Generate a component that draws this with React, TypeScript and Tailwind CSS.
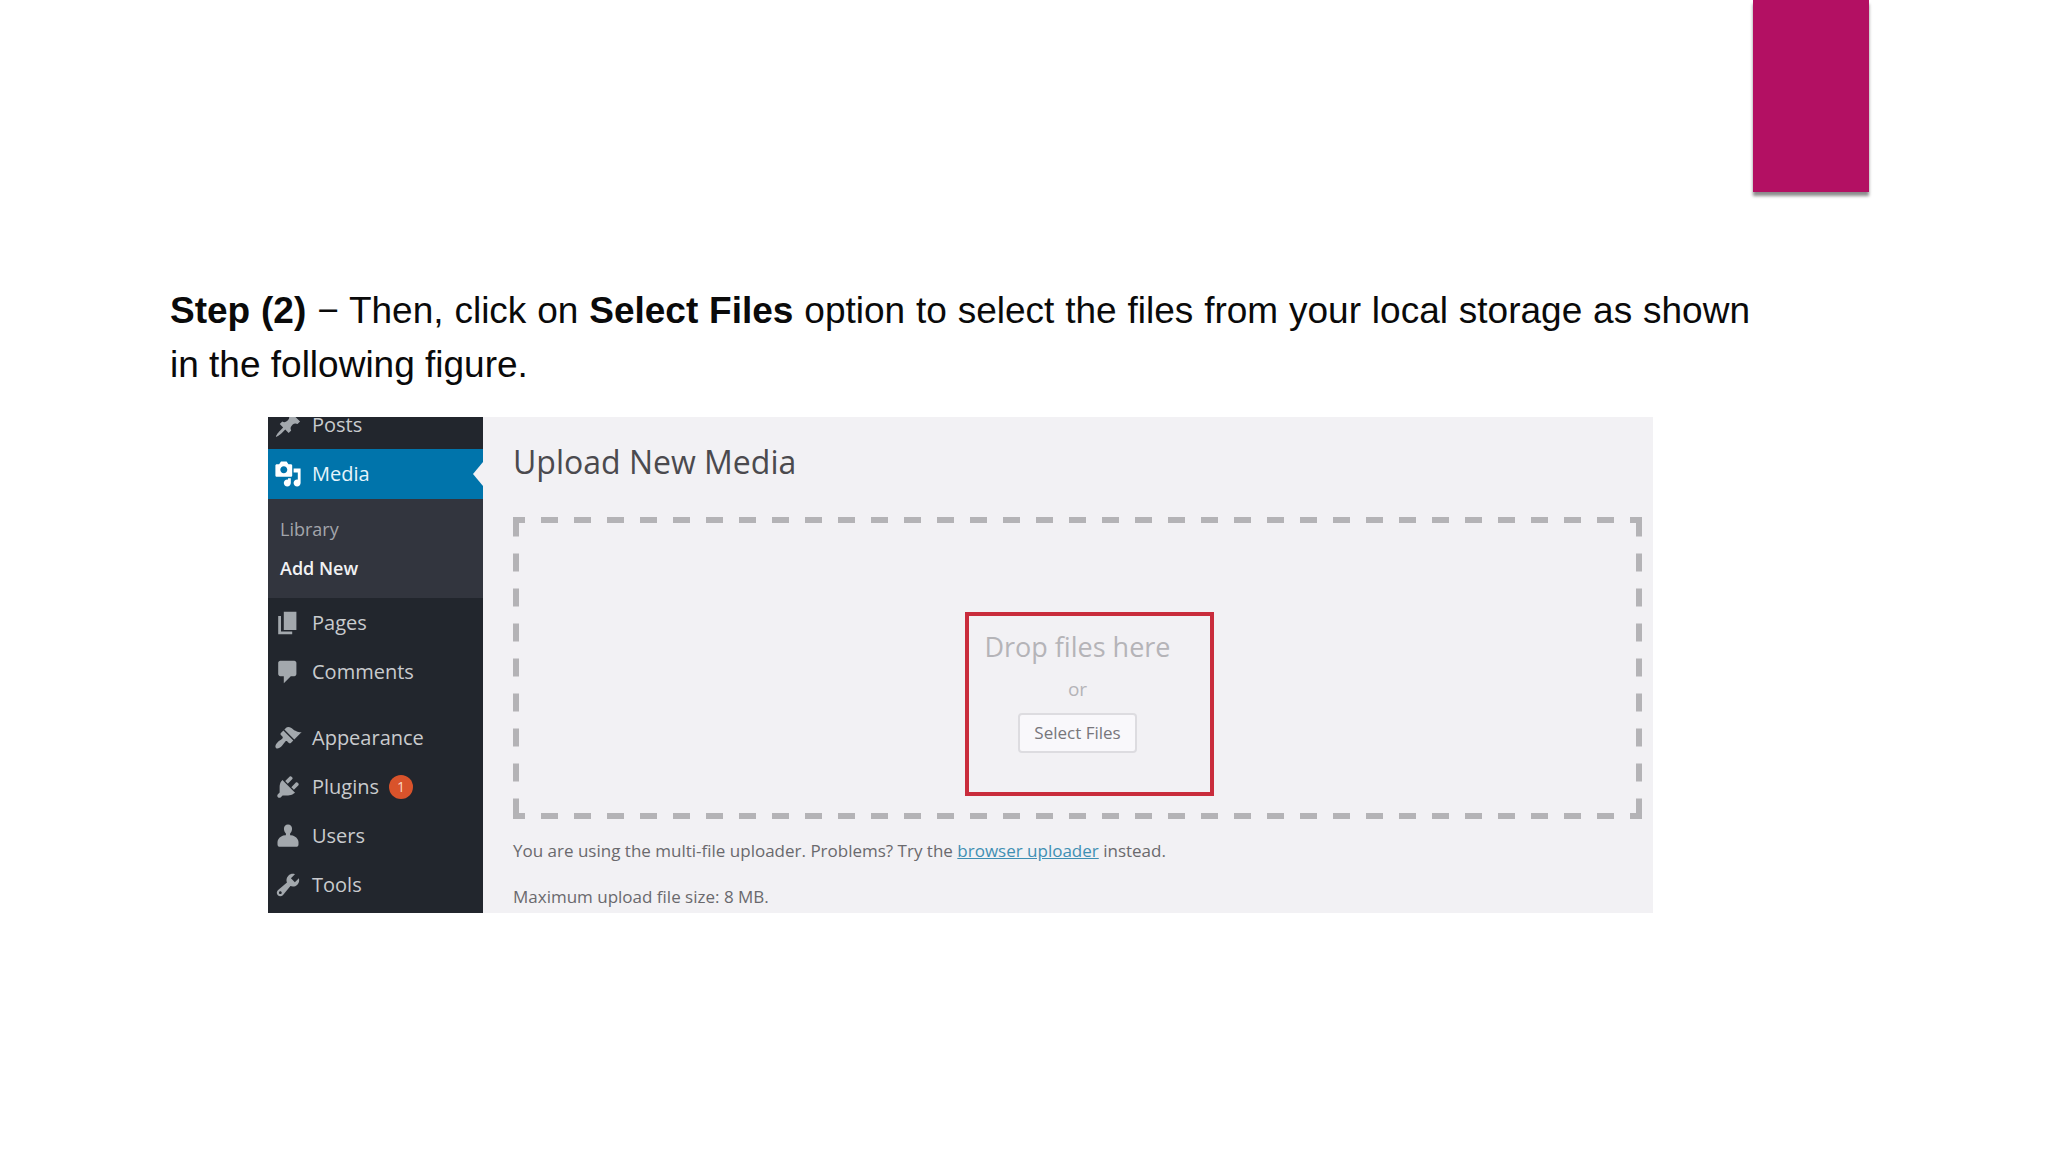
import {ReactNode} from 'react';

type MenuItem = {
    label: string;
    icon: string;
    badge?: number;
};

const icons = {
    posts: 'M10.44 3.02l1.82-1.82 6.36 6.35-1.83 1.82c-1.05-.68-2.48-.57-3.41.36l-.75.75c-.92.93-1.04 2.35-.35 3.41l-1.83 1.82-2.41-2.41-2.8 2.79c-.42.42-3.38 2.71-3.8 2.29s1.86-3.39 2.28-3.81l2.79-2.79L4.1 9.36l1.83-1.82c1.05.69 2.48.57 3.4-.36l.75-.75c.93-.92 1.05-2.35.36-3.41z',
    media: 'M13 11V4c0-.55-.45-1-1-1h-1.67L9 1H5L3.67 3H2c-.55 0-1 .45-1 1v7c0 .55.45 1 1 1h10c.55 0 1-.45 1-1zM7 4.5c1.38 0 2.5 1.12 2.5 2.5S8.38 9.5 7 9.5 4.5 8.38 4.5 7 5.62 4.5 7 4.5zM14 6h5v10.5c0 1.38-1.12 2.5-2.5 2.5S14 17.88 14 16.5s1.12-2.5 2.5-2.5c.17 0 .34.02.5.05V9h-3V6zm-4 8.05V13h2v3.5c0 1.38-1.12 2.5-2.5 2.5S7 17.88 7 16.5 8.12 14 9.5 14c.17 0 .34.02.5.05z',
    pages: 'M7 15V2h9v13H7zm-1 1h7v2H3V5h2v11z',
    comments: 'M4.5 2h10c.8 0 1.5.7 1.5 1.5v8c0 .8-.7 1.5-1.5 1.5H12l-5 5v-5H4.5C3.7 13 3 12.300 3 11.500v-8C3 2.700 3.700 2 4.500 2z',
    appearance: 'M14.48 11.06L7.41 3.99l1.5-1.5c.5-.56 2.3-.47 3.51.32 1.21.8 1.43 1.28 2.91 2.1 1.18.64 2.45 1.26 4.45.85zm-.71.71L6.7 4.7 4.93 6.47c-.39.39-.39 1.02 0 1.41l1.06 1.06c.39.39.39 1.03 0 1.42-.6.6-1.43 1.11-2.21 1.69-.35.26-.7.53-1.01.84C1.43 14.23.4 16.08 1.4 17.07c.99 1 2.84-.03 4.18-1.36.31-.31.58-.66.85-1.02.57-.78 1.08-1.61 1.69-2.21.39-.39 1.02-.39 1.41 0l1.06 1.06c.39.39 1.02.39 1.41 0z',
    plugins: 'M13.11 4.36L9.87 7.6 8 5.73l3.24-3.24c.35-.34 1.05-.2 1.56.32.52.51.66 1.21.31 1.55zm-8 1.77l.91-1.12 9.01 9.01-1.19.84c-.71.71-2.63 1.16-3.82 1.16H6.14L4.9 17.26c-.59.59-1.54.59-2.12 0-.59-.58-.59-1.53 0-2.12l1.24-1.24v-3.88c0-1.13.4-3.19 1.09-3.89zm7.26 3.97l3.24-3.24c.34-.35 1.04-.21 1.55.31.52.51.66 1.21.31 1.55l-3.24 3.25z',
    users: 'M10 1.800c1.800 0 2.900 1.300 2.900 3.100 0 1.300-.6 2.600-1.400 3.300v1.300c1.300-.1 2.300.2 3.300.8 1.600.9 2.700 2.300 2.700 4v1.700c0 1-.7 1.700-1.700 1.700H4.200c-1 0-1.700-.7-1.700-1.700v-1.700c0-1.700 1.100-3.100 2.700-4 1-.6 2-.9 3.300-.8V8.200C7.700 7.500 7.100 6.200 7.100 4.900c0-1.800 1.100-3.100 2.900-3.100z',
    tools: 'M16.68 9.77c-1.34 1.34-3.3 1.67-4.95.99l-5.41 6.52c-.99.99-2.59.99-3.58 0s-.99-2.59 0-3.57l6.52-5.42c-.68-1.65-.35-3.61.99-4.95 1.28-1.28 3.12-1.62 4.72-1.06l-2.89 2.89 2.82 2.82 2.86-2.87c.53 1.58.18 3.39-1.08 4.65zM3.81 16.21c.4.39 1.04.39 1.43 0 .4-.4.4-1.04 0-1.43-.39-.4-1.03-.4-1.43 0-.39.39-.39 1.03 0 1.43z',
};

const contentItems: MenuItem[] = [
    {label: 'Pages', icon: icons.pages},
    {label: 'Comments', icon: icons.comments},
];

const adminItems: MenuItem[] = [
    {label: 'Appearance', icon: icons.appearance},
    {label: 'Plugins', icon: icons.plugins, badge: 1},
    {label: 'Users', icon: icons.users},
    {label: 'Tools', icon: icons.tools},
];

function MenuLink({item, active, children}: { item: MenuItem, active?: boolean, children?: ReactNode }) {
    return (
        <a href="#" className={active
            ? 'relative flex h-[50px] shrink-0 items-center gap-[10px] bg-[#0074ab] pl-[6px] text-[#e6f4fb]'
            : 'flex h-[49px] shrink-0 items-center gap-[10px] pl-[6px] text-[#c9cbce]'}>
            <svg viewBox="0 0 20 20" aria-hidden="true"
                 className={active ? 'size-[28px] fill-white' : 'size-[28px] fill-[#a3a8ad]'}>
                <path d={item.icon}/>
            </svg>
            <span>{item.label}</span>
            {item.badge && (
                <span className="flex size-6 items-center justify-center rounded-full bg-[#d9532b] text-[14px] text-[#fbd9c4]">
                    {item.badge}
                </span>
            )}
            {children}
        </a>
    );
}

function Sidebar() {
    return (
        <nav className="flex w-[215px] shrink-0 flex-col justify-end bg-[#22262d] pb-1 text-[20px] leading-6">
            <MenuLink item={{label: 'Posts', icon: icons.posts}}/>
            <MenuLink item={{label: 'Media', icon: icons.media}} active>
                <svg viewBox="0 0 10 24" aria-hidden="true" className="absolute right-0 top-[13px] h-6 w-[10px] fill-[#f2f1f4]">
                    <path d="M10 0v24L0 12z"/>
                </svg>
            </MenuLink>
            <div className="flex h-[99px] shrink-0 flex-col gap-[15px] bg-[#32353e] pl-3 pt-[18px] text-[18px]">
                <a href="#" className="text-[#a3a5ab]">Library</a>
                <a href="#" className="font-semibold text-[#f1f1f3]">Add New</a>
            </div>
            <div className="mb-[17px]">
                {contentItems.map(item => <MenuLink key={item.label} item={item}/>)}
            </div>
            {adminItems.map(item => <MenuLink key={item.label} item={item}/>)}
        </nav>
    );
}

// One gradient per side, each tile holding a single centred dash
function DropZone() {
    return (
        <div className="flex h-[302px] flex-col items-center bg-[image:linear-gradient(90deg,transparent_8px,#b4b3b6_8px_25px,transparent_25px),linear-gradient(90deg,transparent_8px,#b4b3b6_8px_25px,transparent_25px),linear-gradient(transparent_8px,#b4b3b6_8px_26px,transparent_26px),linear-gradient(transparent_8px,#b4b3b6_8px_26px,transparent_26px)] bg-[length:33px_6px,33px_6px,6px_35px,6px_35px] bg-[position:center_top,center_bottom,left_center,right_center] pt-28 [background-repeat:repeat-x,repeat-x,repeat-y,repeat-y]">
            <div className="relative flex h-[147px] flex-col items-center">
                <div className="absolute -bottom-5 -left-[19px] -right-[43px] -top-[17px] border-4 border-[#c92c3c]"/>
                <p className="text-[27px] leading-9 text-[#b5b4b8]">Drop files here</p>
                <p className="mt-3 text-[19px] leading-6 text-[#b5b4b8]">or</p>
                <button type="button" className="relative mt-3 h-10 w-[119px] rounded-sm border-2 border-[#dddce0] bg-[#f9f8fb] text-[17px] text-[#77767b]">
                    Select Files
                </button>
            </div>
        </div>
    );
}

export default function App() {
    return (
        <div className="min-h-screen bg-white">
            <div className="flex justify-end pr-[179px]">
                <div className="h-48 w-[116px] bg-[#b31063] shadow-[0_4px_3px_rgba(0,0,0,0.45)]"/>
            </div>

            <main className="pl-[170px] pr-[298px] pt-[92px]">
                <p className="text-justify font-['Liberation_Sans',Arial,sans-serif] text-[37px] leading-[54px] text-[#0a0a0a]">
                    <strong>Step (2)</strong> − Then, click on <strong>Select Files</strong> option to select the files
                    from your local storage as shown in the following figure.
                </p>

                <section className="ml-[98px] mr-[97px] mt-[25px] flex h-[496px] overflow-hidden bg-[#f2f1f4] font-['Open_Sans',sans-serif]">
                    <Sidebar/>

                    <div className="flex-1 pl-[30px] pr-[11px] pt-[21px]">
                        <h1 className="text-[32px] leading-[48px] text-[#4b4a4e]">Upload New Media</h1>
                        <div className="mt-[31px]">
                            <DropZone/>
                        </div>
                        <div className="mt-5 flex flex-col gap-[22px] text-[17px] leading-6 text-[#6a696d]">
                            <p>
                                You are using the multi-file uploader. Problems? Try the <a href="#" className="text-[#3f8fb3] underline">browser uploader</a> instead.
                            </p>
                            <p>Maximum upload file size: 8 MB.</p>
                        </div>
                    </div>
                </section>
            </main>
        </div>
    );
}
